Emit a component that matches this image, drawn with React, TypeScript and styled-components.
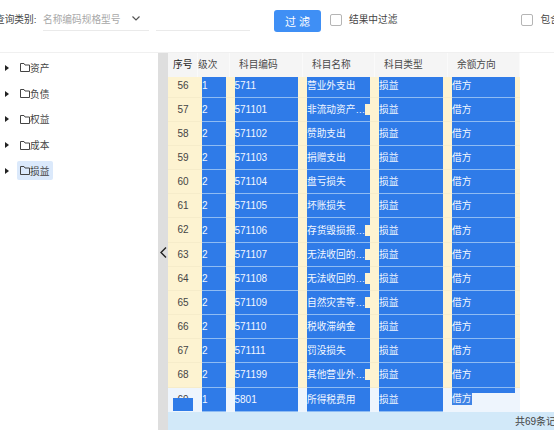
import React from "react";
import styled, { createGlobalStyle } from "styled-components";

const Global = createGlobalStyle`
  html, body { margin: 0; padding: 0; background: #fff; }
  body { font-family: "Liberation Sans", "Noto Sans CJK SC", sans-serif; font-size: 9.7px; color: #333; }
`;

const Page = styled.div`
  width: 554px;
  height: 430px;
  overflow: hidden;
  display: flex;
  flex-direction: column;
`;

const Toolbar = styled.div`
  height: 53px;
  flex: none;
  box-sizing: border-box;
  border-bottom: 1px solid #f0f0f0;
  display: flex;
  align-items: flex-start;
  white-space: nowrap;
  padding-top: 10px;
  margin-left: -5px;
`;

const Label = styled.span`
  width: 48px;
  flex: none;
  line-height: 20px;
  color: #444;
`;

const Field = styled.div<{ $w: number; $ml: number }>`
  width: ${(p) => p.$w}px;
  margin-left: ${(p) => p.$ml}px;
  flex: none;
  height: 21px;
  box-sizing: border-box;
  border-bottom: 1px solid #eaeaea;
  display: flex;
  align-items: flex-start;
  justify-content: space-between;
  padding-right: 9px;
  line-height: 20px;
  color: #a8a8a8;
`;

const FilterButton = styled.button`
  margin-left: 24px;
  width: 47px;
  height: 22px;
  flex: none;
  border: 0;
  border-radius: 3px;
  background: #3f8ff5;
  color: #fff;
  font: inherit;
  font-size: 11px;
  letter-spacing: 3px;
  padding: 0 0 0 3px;
`;

const Check = styled.span<{ $ml: number }>`
  width: 12px;
  height: 12px;
  box-sizing: border-box;
  margin-left: ${(p) => p.$ml}px;
  margin-top: 4px;
  flex: none;
  border: 1px solid #b5b5b5;
  border-radius: 2px;
  background: #fff;
`;

const CheckText = styled.span`
  margin-left: 7.5px;
  line-height: 20px;
  color: #444;
  width: 48px;
  flex: none;
`;

const Main = styled.div`
  flex: 1;
  min-height: 0;
  display: flex;
`;

const Tree = styled.div`
  width: 158px;
  flex: none;
  padding-top: 2px;
  box-sizing: border-box;
`;

const TreeRow = styled.div`
  height: 25.75px;
  display: flex;
  align-items: center;
  padding-left: 5px;
`;

const TreeLabel = styled.span<{ $active?: boolean }>`
  display: flex;
  align-items: center;
  height: 19px;
  margin-left: 8px;
  padding: 0 4px 0 3px;
  border-radius: 2px;
  background: ${(p) => (p.$active ? "#dbe9fb" : "transparent")};
  color: #444;
`;

const Splitter = styled.div`
  width: 10px;
  flex: none;
  background: #dedede;
  display: flex;
  align-items: center;
  justify-content: center;
  padding-top: 22px;
  box-sizing: border-box;
`;

const Right = styled.div`
  flex: 1;
  min-width: 0;
  display: flex;
  flex-direction: column;
`;

const Columns = "30px 32px 72.5px 72.5px 72.5px 72px";

const HeadRow = styled.div`
  height: 24px;
  flex: none;
  width: 351.5px;
  display: grid;
  grid-template-columns: ${Columns};
  background: #f5f5f5;
  position: relative;
  z-index: 1;
`;

const HeadCell = styled.div<{ $pad: number; $strong?: boolean }>`
  padding-left: ${(p) => p.$pad}px;
  border-right: 1px solid #fafafa;
  line-height: 24px;
  color: ${(p) => (p.$strong ? "#222" : "#4a4a4a")};
  white-space: nowrap;
`;

const Body = styled.div`
  flex: 1;
  min-height: 0;
  overflow: hidden;
`;

const List = styled.div`
  margin-top: -3.5px;
  width: 351.5px;
`;

const Row = styled.div<{ $last?: boolean }>`
  height: 24.17px;
  display: grid;
  grid-template-columns: ${Columns};
  background: ${(p) => (p.$last ? "#eef5fd" : "#fdf3d1")};
  box-shadow: inset 0 -1px 0 ${(p) => (p.$last ? "#eef5fd" : "#f6ecca")};
`;

const Num = styled.div`
  position: relative;
  text-align: center;
  line-height: 23px;
  color: #444;
  font-size: 10px;
`;

const NumMark = styled.span`
  position: absolute;
  left: 5px;
  right: 5px;
  top: 10px;
  bottom: 1px;
  background: #2f7be8;
`;

const Cell = styled.div<{ $l: number; $r: number }>`
  padding: 0 ${(p) => p.$r}px 0 ${(p) => p.$l}px;
  min-width: 0;
`;

const Sel = styled.div`
  height: 23.17px;
  background: #2f7be8;
  box-shadow: 0 1px 0 #8fbcf3;
  color: #f2f7ff;
  line-height: 23px;
  display: flex;
  align-items: center;
  white-space: nowrap;
`;

const CellText = styled.span<{ $digits?: boolean }>`
  flex: 1;
  min-width: 0;
  overflow: hidden;
  text-overflow: ellipsis;
  font-size: ${(p) => (p.$digits ? "10px" : "inherit")};
`;

const Notch = styled.span`
  flex: none;
  width: 5px;
  height: 11px;
  margin-left: -1.5px;
  background: #fdf3d1;
`;

const PartTop = styled.div`
  height: 5px;
  background: #2f7be8;
`;

const PartText = styled.div`
  width: 20px;
  height: 12px;
  line-height: 12px;
  background: #3f84e6;
  color: #f2f7ff;
`;

const Footer = styled.div`
  height: 18px;
  flex: none;
  background: #d2e9f9;
  padding-left: 347px;
  font-size: 10px;
  line-height: 19px;
  white-space: nowrap;
  color: #444;
  overflow: hidden;
`;

const Caret = () => (
  <svg width="4" height="6" viewBox="0 0 4 6"><path d="M0 0L4 3L0 6Z" fill="#222" /></svg>
);

const Folder = () => (
  <svg width="10" height="9" viewBox="0 0 10 9">
    <path d="M.5 8.5V.5h3.5l1 1.5h4.5v6.5z" fill="none" stroke="#444" strokeWidth="1" />
  </svg>
);

const Chevron = () => (
  <svg width="7" height="11" viewBox="0 0 7 11"><path d="M6 .5L1 5.5L6 10.5" fill="none" stroke="#222" strokeWidth="1.4" /></svg>
);

const Down = () => (
  <svg width="8" height="5" viewBox="0 0 8 5" style={{ marginTop: 6 }}><path d="M.5.5L4 4L7.5.5" fill="none" stroke="#555" strokeWidth="1.2" /></svg>
);

const rows: [number, number, string, string, boolean][] = [
  [56, 1, "5711", "营业外支出", false],
  [57, 2, "571101", "非流动资产处置损失", true],
  [58, 2, "571102", "赞助支出", false],
  [59, 2, "571103", "捐赠支出", false],
  [60, 2, "571104", "盘亏损失", false],
  [61, 2, "571105", "坏账损失", false],
  [62, 2, "571106", "存货毁损报废损失", true],
  [63, 2, "571107", "无法收回的债券损失", true],
  [64, 2, "571108", "无法收回的长期投资", true],
  [65, 2, "571109", "自然灾害等不可抗力", true],
  [66, 2, "571110", "税收滞纳金", false],
  [67, 2, "571111", "罚没损失", false],
  [68, 2, "571199", "其他营业外支出项目", true],
  [69, 1, "5801", "所得税费用", false],
];

const tree = ["资产", "负债", "权益", "成本", "损益"];

export default function App() {
  return (
    <Page>
      <Global />
      <Toolbar>
        <Label>查询类别:</Label>
        <Field $w={106} $ml={0}>
          <span>名称编码规格型号</span>
          <Down />
        </Field>
        <Field $w={94} $ml={7} />
        <FilterButton>过滤</FilterButton>
        <Check $ml={8.5} />
        <CheckText>结果中过滤</CheckText>
        <Check $ml={124} />
        <CheckText>包含</CheckText>
      </Toolbar>
      <Main>
        <Tree>
          {tree.map((t, i) => (
            <TreeRow key={t}>
              <Caret />
              <TreeLabel $active={i === 4}>
                <Folder />
                {t}
              </TreeLabel>
            </TreeRow>
          ))}
        </Tree>
        <Splitter>
          <Chevron />
        </Splitter>
        <Right>
          <HeadRow>
            <HeadCell $pad={5} $strong>序号</HeadCell>
            <HeadCell $pad={0}>级次</HeadCell>
            <HeadCell $pad={9}>科目编码</HeadCell>
            <HeadCell $pad={9.5}>科目名称</HeadCell>
            <HeadCell $pad={9}>科目类型</HeadCell>
            <HeadCell $pad={9.5}>余额方向</HeadCell>
          </HeadRow>
          <Body>
            <List>
              {rows.map(([n, lvl, code, name, cut]) => {
                const last = n === 69;
                return (
                  <Row key={n} $last={last}>
                    <Num>
                      {n}
                      {last && <NumMark />}
                    </Num>
                    <Cell $l={4} $r={4.5}>
                      <Sel><CellText $digits>{lvl}</CellText></Sel>
                    </Cell>
                    <Cell $l={4.5} $r={4.5}>
                      <Sel><CellText $digits>{code}</CellText></Sel>
                    </Cell>
                    <Cell $l={4.5} $r={5}>
                      <Sel>
                        <CellText>{name}</CellText>
                        {cut && <Notch />}
                      </Sel>
                    </Cell>
                    <Cell $l={4} $r={5}>
                      <Sel><CellText>损益</CellText></Sel>
                    </Cell>
                    <Cell $l={4.5} $r={5}>
                      {last ? (
                        <>
                          <PartTop />
                          <PartText>借方</PartText>
                        </>
                      ) : (
                        <Sel><CellText>借方</CellText></Sel>
                      )}
                    </Cell>
                  </Row>
                );
              })}
            </List>
          </Body>
          <Footer>共69条记录</Footer>
        </Right>
      </Main>
    </Page>
  );
}
